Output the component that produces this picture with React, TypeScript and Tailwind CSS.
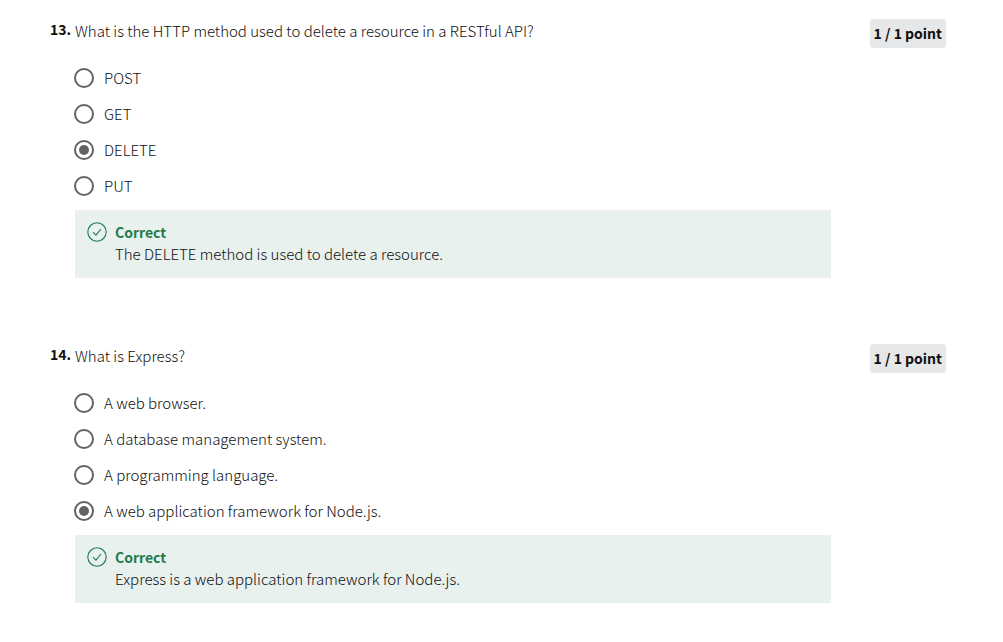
type Question = {
  number: number;
  text: string;
  options: string[];
  answer: number;
  feedback: string;
};

const questions: Question[] = [
  {
    number: 13,
    text: "What is the HTTP method used to delete a resource in a RESTful API?",
    options: ["POST", "GET", "DELETE", "PUT"],
    answer: 2,
    feedback: "The DELETE method is used to delete a resource.",
  },
  {
    number: 14,
    text: "What is Express?",
    options: [
      "A web browser.",
      "A database management system.",
      "A programming language.",
      "A web application framework for Node.js.",
    ],
    answer: 3,
    feedback: "Express is a web application framework for Node.js.",
  },
];

function CheckCircle() {
  return (
    <svg viewBox="0 0 20 20" className="size-5 shrink-0" fill="none" stroke="#1d7c50" aria-hidden="true">
      <circle cx="10" cy="10" r="9.2" strokeWidth="1.1" />
      <path d="M6 10.2 9 13.1 14 7" strokeWidth="1.1" />
    </svg>
  );
}

function Option({ name, label, checked }: { name: string; label: string; checked: boolean }) {
  return (
    <label className="flex h-9 items-center gap-2.5">
      <input
        type="radio"
        name={name}
        defaultChecked={checked}
        className="size-5 shrink-0 appearance-none rounded-full border-2 border-[#636363] bg-white bg-clip-content p-[3px] checked:bg-[#636363]"
      />
      <span>{label}</span>
    </label>
  );
}

function QuestionBlock({ question }: { question: Question }) {
  return (
    <section className="flex items-start">
      <div className="w-[25px] shrink-0 text-[14px] leading-5 font-bold">{question.number}.</div>
      <div className="min-w-0 flex-1">
        <fieldset>
          <legend className="pt-px pb-4">{question.text}</legend>
          <div className="-ml-px pt-0.5 pb-1.5">
            {question.options.map((label, i) => (
              <Option key={label} name={`question-${question.number}`} label={label} checked={i === question.answer} />
            ))}
          </div>
        </fieldset>
        <div className="flex gap-2 bg-[#e8f1ee] px-3 pt-[11px] pb-[13px]">
          <div className="pt-px">
            <CheckCircle />
          </div>
          <div>
            <p className="text-[14px] font-bold text-[#1d7c50]">Correct</p>
            <p>{question.feedback}</p>
          </div>
        </div>
      </div>
      <div className="ml-[39px] shrink-0 rounded-[3px] bg-[#e5e7e8] px-1 pt-[3px] pb-1 text-[14px] font-bold">
        1 / 1 point
      </div>
    </section>
  );
}

export default function App() {
  return (
    <main className="flex flex-col gap-[66px] bg-white pt-[19px] pr-[57px] pb-10 pl-[50px] font-['Noto_Sans_CJK_SC',sans-serif] text-[15px] leading-[22px] font-light text-[#0f0f0f]">
      {questions.map((question) => (
        <QuestionBlock key={question.number} question={question} />
      ))}
    </main>
  );
}
